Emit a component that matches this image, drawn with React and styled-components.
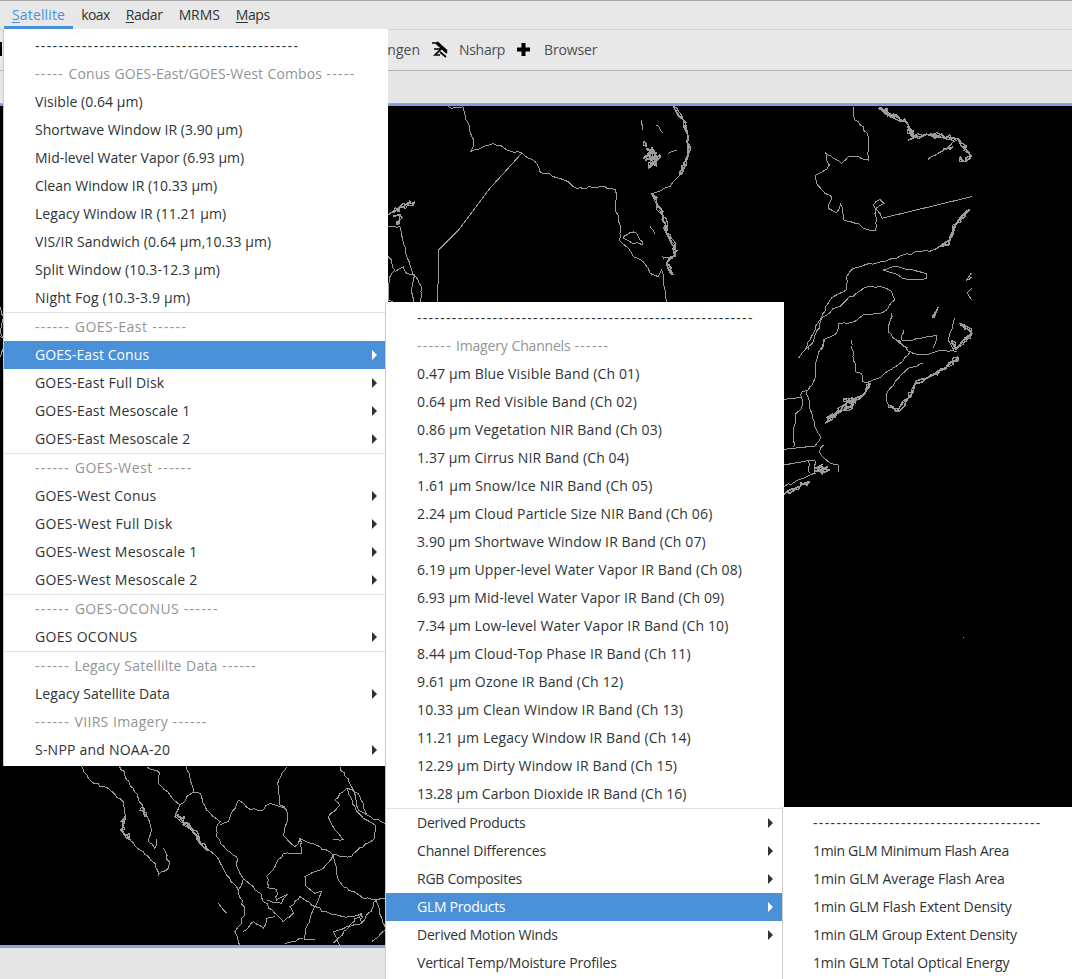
import React from "react";
import styled, { createGlobalStyle } from "styled-components";

const Global = createGlobalStyle`
  html, body { margin: 0; padding: 0; background: #e8e8e8; }
  body { font-family: "Open Sans", "DejaVu Sans", sans-serif; font-size: 14px; color: #2e3436; }
`;

const Page = styled.div`
  position: relative;
  width: 1072px;
  height: 979px;
  overflow: hidden;
  display: flex;
  flex-direction: column;
  background: #e8e8e8;
`;

const MenuBar = styled.div`
  height: 29px;
  box-sizing: border-box;
  flex: none;
  display: flex;
  padding-left: 4px;
  border-top: 1px solid #a8a8a8;
  background: #e8e8e8;
`;

const MenuTitle = styled.div`
  padding: 0 8px;
  line-height: 27px;
  height: 28px;
  box-sizing: border-box;
  letter-spacing: ${(p) => p.$track}px;
  color: ${(p) => (p.$open ? "#4a90d9" : "#2e3436")};
  border-bottom: ${(p) => (p.$open ? "3px solid #4a90d9" : "none")};
  & u { text-underline-offset: 2px; }
`;

const ToolBar = styled.div`
  height: 42px;
  flex: none;
  box-sizing: border-box;
  display: flex;
  align-items: center;
  padding-bottom: 2px;
  border-top: 1px solid #d4d4d4;
  border-bottom: 1px solid #b4b4a8;
  background: #e8e8e8;
  color: #4a4f51;
`;

const ToolLead = styled.div`
  flex: 0 0 420px;
  display: flex;
  justify-content: space-between;
  align-items: center;
`;

const LeadMark = styled.span`
  width: 2px;
  height: 14px;
  background: #000;
`;

const ToolLabel = styled.span`
  letter-spacing: ${(p) => p.$track}px;
`;

const ToolIcon = styled.svg`
  margin-left: ${(p) => p.$before}px;
  margin-right: ${(p) => p.$after}px;
  flex: none;
`;

const TabStrip = styled.div`
  height: 33px;
  flex: none;
  background: #e6e6e6;
  border-bottom: 1px solid #a9a9a9;
  box-sizing: border-box;
`;

const MapPane = styled.div`
  height: 839px;
  flex: none;
  background: #000;
  border-top: 2px solid #7f9fdc;
  border-bottom: 3px solid #8aa6dd;
  & svg { display: block; }
`;

const StatusBar = styled.div`
  flex: 1;
  background: #e6e6e6;
`;

const Menu = styled.div`
  position: absolute;
  left: ${(p) => p.$x}px;
  top: ${(p) => p.$y}px;
  width: ${(p) => p.$w}px;
  height: ${(p) => p.$h}px;
  box-sizing: border-box;
  padding: ${(p) => p.$pad || "2px 2px 2px 0"};
  background: #fff;
  box-shadow: ${(p) => p.$edge || "-1px 0 0 #c9c9c9"};
`;

const Row = styled.div`
  position: relative;
  height: 28px;
  line-height: 28px;
  padding: 0 9px 0 31px;
  display: flex;
  justify-content: space-between;
  align-items: center;
  white-space: nowrap;
  word-spacing: ${(p) => (p.$muted ? 0.6 : 0)}px;
  color: ${(p) => (p.$active ? "#fff" : p.$muted ? "#929595" : "#2e3436")};
  background: ${(p) => (p.$active ? "#4a90d9" : "transparent")};
  letter-spacing: ${(p) => p.$track ?? -0.25}px;
`;

const Arrow = styled.span`
  width: 0;
  height: 0;
  border-style: solid;
  border-width: 5px 0 5px 5px;
  border-color: transparent transparent transparent ${(p) => (p.$active ? "#fff" : "#2e3436")};
`;

const Sep = styled.div`
  height: 1px;
  background: #e2e2e2;
`;

const Dashes = styled.span`
  letter-spacing: ${(p) => p.$gap}px;
`;

const Line = styled.span``;

const Dashed = ({ n, gap = 1.33 }) => <Dashes $gap={gap}>{"-".repeat(n)}</Dashes>;

const H = ({ d, t, k }) => (
  <Row $muted $track={k}>
    <Line>
      <Dashed n={d} />
      {" "}{t}{" "}
      <Dashed n={d} />
    </Line>
  </Row>
);

const I = ({ t, sub, active, k }) => (
  <Row $active={active} $track={k}>
    <Line>{t}</Line>
    {sub && <Arrow $active={active} />}
  </Row>
);

const D = ({ n, gap }) => (
  <Row $track={0}>
    <Line><Dashed n={n} gap={gap} /></Line>
  </Row>
);

const channels = [
  ["0.47 µm Blue Visible Band (Ch 01)", 0.14],
  ["0.64 µm Red Visible Band (Ch 02)", 0.19],
  ["0.86 µm Vegetation NIR Band (Ch 03)", 0.15],
  ["1.37 µm Cirrus NIR Band (Ch 04)", 0.1],
  ["1.61 µm Snow/Ice NIR Band (Ch 05)", 0.2],
  ["2.24 µm Cloud Particle Size NIR Band (Ch 06)", 0.14],
  ["3.90 µm Shortwave Window IR Band (Ch 07)", 0.1],
  ["6.19 µm Upper-level Water Vapor IR Band (Ch 08)", 0.11],
  ["6.93 µm Mid-level Water Vapor IR Band (Ch 09)", 0.08],
  ["7.34 µm Low-level Water Vapor IR Band (Ch 10)", 0.13],
  ["8.44 µm Cloud-Top Phase IR Band (Ch 11)", 0.11],
  ["9.61 µm Ozone IR Band (Ch 12)", 0.16],
  ["10.33 µm Clean Window IR Band (Ch 13)", 0.15],
  ["11.21 µm Legacy Window IR Band (Ch 14)", 0.15],
  ["12.29 µm Dirty Window IR Band (Ch 15)", 0.13],
  ["13.28 µm Carbon Dioxide IR Band (Ch 16)", 0.03],
];

const combos = [
  ["Visible (0.64 µm)", 0.05],
  ["Shortwave Window IR (3.90 µm)", 0.03],
  ["Mid-level Water Vapor (6.93 µm)", 0],
  ["Clean Window IR (10.33 µm)", 0],
  ["Legacy Window IR (11.21 µm)", 0.05],
  ["VIS/IR Sandwich (0.64 µm,10.33 µm)", 0.1],
  ["Split Window (10.3-12.3 µm)", 0.12],
  ["Night Fog (10.3-3.9 µm)", 0.18],
];

// Turns a sketched outline into the stair-stepped, jagged line of a low-resolution coast map.
const roughen = (d, amp, seed) => {
  let s = seed;
  const rnd = () => {
    s = (s * 16807) % 2147483647;
    return (s % 1000) / 1000 - 0.5;
  };
  const step = 12;
  let out = "";
  let px = 0;
  let py = 0;
  let sx = 0;
  let sy = 0;
  const walk = (x, y) => {
    const len = Math.hypot(x - px, y - py);
    const n = Math.max(1, Math.round(len / step));
    for (let i = 1; i <= n; i++) {
      const t = i / n;
      const jx = i === n ? 0 : rnd() * amp * 2;
      const jy = i === n ? 0 : rnd() * amp * 2;
      out += `L${(px + (x - px) * t + jx).toFixed(1)} ${(py + (y - py) * t + jy).toFixed(1)}`;
    }
    px = x;
    py = y;
  };
  for (const m of d.matchAll(/([MLZ])\s*(-?[\d.]*)\s*(-?[\d.]*)/g)) {
    const x = parseFloat(m[2]);
    const y = parseFloat(m[3]);
    if (m[1] === "M") {
      out += `M${x} ${y}`;
      px = sx = x;
      py = sy = y;
    } else if (m[1] === "L") {
      walk(x, y);
    } else {
      walk(sx, sy);
    }
  }
  return out;
};

const CoastLine = styled.path`
  fill: none;
  stroke: #9c9c9c;
  stroke-width: ${(p) => p.$weight}px;
  vector-effect: non-scaling-stroke;
  shape-rendering: crispEdges;
`;

const Coast = ({ ox, oy, thin = [], thick = [], straight = [] }) => (
  <g transform={`translate(${ox} ${oy - 106}) scale(0.3333)`}>
    {straight.map((d, i) => <CoastLine key={`s${i}`} d={d} $weight={1} />)}
    {thin.map((d, i) => <CoastLine key={`t${i}`} d={roughen(d, 3.5, 101 + i * 37)} $weight={1} />)}
    {thick.map((d, i) => (
      <React.Fragment key={`k${i}`}>
        <CoastLine d={roughen(d, 9, 211 + i * 53)} $weight={1.2} />
        <CoastLine d={roughen(d, 9, 977 + i * 71)} $weight={1.2} />
        <CoastLine d={roughen(d, 5, 503 + i * 91)} $weight={1.6} />
      </React.Fragment>
    ))}
  </g>
);

const MapDrawing = () => (
  <svg width="1072" height="839" viewBox="0 0 1072 839">
    <Coast
      ox={380}
      oy={100}
      straight={["M425 160 L330 265 L240 385 L175 450 L175 530 L172 605"]}
      thin={[
        "M250 20 L255 45 L265 70 L270 95 L282 120 L280 140 L272 155 L290 150 L310 140 L340 130 L360 135 L380 150 L425 158 L445 175 L465 185 L480 215 L510 222 L540 235 L565 245 L590 265 L640 262 L675 260 L705 268 L708 300 L705 330 L717 350 L720 400 L717 420 L745 445 L760 470 L790 485 L810 520 L835 530 L845 510 L850 530 L860 605",
        "M730 410 L750 398 L770 400 L788 425 L788 435 L750 425 L730 415Z",
        "M900 225 L870 260 L815 282",
        "M25 380 L60 380 L70 430 L95 510 L125 560 L120 605",
        "M25 470 L45 510 L30 530 L25 600 L40 605",
        "M45 515 L70 500 L80 520 L105 525 L95 570 L100 605",
        "M205 20 L215 25 L240 22 L250 20",
        "M810 380 L825 400 M850 475 L880 475 L845 470",
        "M785 60 L788 90 M830 75 L850 100 M865 160 L890 150",
      ]}
      thick={[
        "M815 280 L830 310 L850 350 L860 400 L885 440 L880 470 L860 490 L880 525",
        "M25 345 L60 320 L105 305",
        "M40 350 L60 345 L55 375",
        "M880 20 L910 60 L925 110 L925 160 L900 225",
        "M790 125 L800 140 M790 175 L820 150 L830 200 M805 205 L840 165 M815 140 L810 190",
        "M795 180 L835 180 M800 150 L830 160",
      ]}
    />
    <Coast
      ox={780}
      oy={100}
      straight={["M305 355 L575 290"]}
      thin={[
        "M220 20 L225 60 L250 80 L265 120 L265 180 L235 170 L205 170 L185 190 L160 175 L135 155 L148 195 L128 215 L108 225 L112 255 L135 280 L155 290 L145 325 L170 338 L182 312 L192 360 L235 370 L250 385 L285 392 L288 330 L280 315 L300 298 L312 310 L288 325 L305 355",
        "M570 330 L530 370 L510 420 L460 450 L370 465 L310 485 L220 505 L200 530 L198 570 L150 600 L120 660 L105 690 L75 750",
        "M310 510 L340 500 L400 510 L440 522 L440 535 L380 538 L345 520Z",
        "M85 750 L130 650 L200 600 L250 565 L300 558 L335 575 L345 600 L320 630 L300 640 L250 645 L215 668 L175 672 L170 700 L130 720 L125 750",
        "M335 640 L325 695 L360 730 L385 745",
        "M370 690 L365 720 L400 720 L470 708 L460 745",
        "M575 518 L560 540 L575 530",
        "M575 565 L562 580 L575 600",
        "M525 655 L505 720 L520 750",
        "M445 178 L500 145 L530 120",
      ]}
      thick={[
        "M295 25 L340 45 L385 75 L400 110 L450 105 L530 115 L570 165",
        "M385 85 L400 115 L385 120 M305 30 L345 55 M450 100 L480 112",
        "M490 150 L520 140 M540 170 L555 185 L575 165",
        "M570 330 L530 370 L510 420 L480 440",
        "M475 620 L460 655",
        "M540 670 L575 700 L530 745",
      ]}
    />
    <Coast
      ox={780}
      oy={340}
      straight={["M12 178 L65 172", "M12 328 L105 318", "M12 375 L85 362"]}
      thin={[
        "M215 0 L225 95 L245 100 L248 125 L270 125 L310 105 L360 70 L390 35 L430 45 L490 30 L530 35",
        "M135 0 L110 60 L108 110 L85 150 L65 155",
        "M80 150 L105 260 L122 290 L105 318",
        "M65 155 L65 205 L48 220 L40 285 L42 320",
        "M85 362 L105 362 L105 400 L12 440",
        "M85 362 L88 400",
        "M430 70 L385 85 L345 125 L320 160 L325 195",
        "M55 55 L100 5",
        "M355 0 L385 35",
        "M130 315 L118 335 L145 365 L175 375 L175 395",
        "M548 895 L553 890",
      ]}
      thick={[
        "M270 130 L250 165 L200 190 L160 225 L135 250",
        "M190 175 L220 190 L190 210 M140 235 L170 220",
        "M325 195 L355 215 L385 175 L405 130 L440 115 L500 80 L535 50",
        "M12 465 L60 440 L90 425",
        "M105 395 L145 380 M105 385 L125 375 L120 395 L150 390",
        "M515 0 L530 30",
      ]}
    />
    <Coast
      ox={0}
      oy={750}
      thin={[
        "M245 48 L265 85 L300 110 L325 115 L370 155 L378 200 L362 240 L390 270 L445 320 L465 340 L475 375 L505 355 L508 335 L490 295",
        "M358 48 L400 115 L430 175 L455 240 L445 275 L465 295 L470 268",
        "M440 50 L480 70 L475 100 L510 135 L540 165 L525 200 L580 240 L610 290 L650 320 L680 375 L715 420 L735 485 L715 530 L705 545 L720 585",
        "M560 48 L580 125 L540 165",
        "M580 128 L600 130 L620 180 L660 215 L650 230 L650 260 L680 300 L710 320 L710 350 L730 385 L760 410 L785 435 L790 455 L825 490 L850 515 L880 490 L870 470 L900 440 L945 470 L915 540 L915 570 L945 570",
        "M860 50 L835 90 L840 165 L860 180 L862 215 L850 255 L885 290 L900 265 L960 290 L1000 315 L970 355 L915 380 L915 405 L945 430 L965 425 L945 470 L1000 495 L1050 500 L1085 490 L1085 520 L1040 530 L1000 545 L1020 585",
        "M715 150 L685 215 L660 225",
        "M715 150 L750 178 L790 180 L810 160 L860 180",
        "M1000 315 L1015 390 L1030 410 L1070 430 L1090 445 L1130 450 L1157 445",
        "M1000 315 L1055 320 L1060 310 L1125 265 L1125 225 L1090 205 L1065 170 L1040 115 L1005 150 L1020 165 L985 200 L1005 240 L1030 268 L1000 270",
        "M1020 50 L1060 120 L1075 180 L1100 195 L1157 222",
        "M900 265 L905 310 L850 310 L825 350 L800 380 L805 410",
        "M730 385 L715 420",
        "M730 545 L760 515 L790 535 L800 505 L825 500",
        "M655 460 L680 490",
        "M855 580 L910 565",
        "M1000 580 L1085 490",
        "M800 410 L830 420 L830 450 L860 435 L845 460 L800 450",
        "M1085 520 L1130 450 L1157 540 L1115 575",
        "M1040 115 L1075 130 L1100 195",
      ]}
      thick={[
        "M530 195 L580 240 L600 280 L625 300",
        "M375 200 L362 240 L390 270",
        "M425 170 L435 200",
      ]}
    />
    <Coast
      ox={0}
      oy={300}
      thin={["M0 20 L10 50 L2 90 L12 130 L2 170", "M0 110 L10 115"]}
    />
  </svg>
);

export default function App() {
  return (
    <Page>
      <Global />
      <MenuBar>
        <MenuTitle $open $track={0.15}><u>S</u>atellite</MenuTitle>
        <MenuTitle $track={-0.6}>koax</MenuTitle>
        <MenuTitle $track={-0.3}><u>R</u>adar</MenuTitle>
        <MenuTitle $track={-0.1}>MRMS</MenuTitle>
        <MenuTitle $track={-0.4}><u>M</u>aps</MenuTitle>
      </MenuBar>
      <ToolBar>
        <ToolLead>
          <LeadMark />
          <span>Warngen</span>
        </ToolLead>
        <ToolIcon $before={11} $after={11} width="17" height="17" viewBox="0 0 17 17" fill="none" stroke="#000" strokeWidth="1.7">
          <path d="M1 2 H5 L16 12 M6 1 L16 10 M3 8 H10 L4 14 H9 M9 11 L15 16" />
        </ToolIcon>
        <ToolLabel $track={-0.3}>Nsharp</ToolLabel>
        <ToolIcon $before={12} $after={14} width="13" height="13" viewBox="0 0 13 13" fill="#000">
          <path d="M4.5 0 H8.5 V4.5 H13 V8.5 H8.5 V13 H4.5 V8.5 H0 V4.5 H4.5 Z" />
        </ToolIcon>
        <ToolLabel $track={-0.15}>Browser</ToolLabel>
      </ToolBar>
      <TabStrip />
      <MapPane>
        <MapDrawing />
      </MapPane>
      <StatusBar />

      <Menu $x={4} $y={29} $w={384} $h={737} $pad="3px 2px 2px 0">
        <D n={45} gap={1.37} />
        <H d={5} t="Conus GOES-East/GOES-West Combos" k={0.1} />
        {combos.map(([t, k]) => <I key={t} t={t} k={k} />)}
        <Sep />
        <H d={6} t="GOES-East" k={0.5} />
        <I t="GOES-East Conus" sub active k={0.08} />
        <I t="GOES-East Full Disk" sub k={0.17} />
        <I t="GOES-East Mesoscale 1" sub k={0.18} />
        <I t="GOES-East Mesoscale 2" sub k={0.18} />
        <Sep />
        <H d={6} t="GOES-West" k={0.5} />
        <I t="GOES-West Conus" sub k={0.22} />
        <I t="GOES-West Full Disk" sub k={0.33} />
        <I t="GOES-West Mesoscale 1" sub k={0.27} />
        <I t="GOES-West Mesoscale 2" sub k={0.27} />
        <Sep />
        <H d={6} t="GOES-OCONUS" k={0.4} />
        <I t="GOES OCONUS" sub k={0.3} />
        <Sep />
        <H d={6} t="Legacy Satellilte Data" k={0.2} />
        <I t="Legacy Satellite Data" sub k={0.04} />
        <H d={6} t="VIIRS Imagery" k={0.3} />
        <I t="S-NPP and NOAA-20" sub k={0.22} />
      </Menu>

      <Menu $x={386} $y={302} $w={398} $h={677}>
        <D n={58} gap={1.3} />
        <H d={6} t="Imagery Channels" k={-0.2} />
        {channels.map(([t, k]) => <I key={t} t={t} k={k} />)}
        <Sep />
        <I t="Derived Products" sub />
        <I t="Channel Differences" sub k={-0.15} />
        <I t="RGB Composites" sub />
        <I t="GLM Products" sub active k={-0.3} />
        <I t="Derived Motion Winds" sub k={-0.2} />
        <I t="Vertical Temp/Moisture Profiles" k={-0.18} />
      </Menu>

      <Menu $x={782} $y={807} $w={290} $h={172} $pad="2px 0 0 0" $edge="inset 1px 0 0 #cfcfcf">
        <D n={39} gap={1.36} />
        <I t="1min GLM Minimum Flash Area" k={-0.32} />
        <I t="1min GLM Average Flash Area" k={-0.1} />
        <I t="1min GLM Flash Extent Density" k={-0.11} />
        <I t="1min GLM Group Extent Density" k={-0.2} />
        <I t="1min GLM Total Optical Energy" k={-0.15} />
      </Menu>
    </Page>
  );
}
